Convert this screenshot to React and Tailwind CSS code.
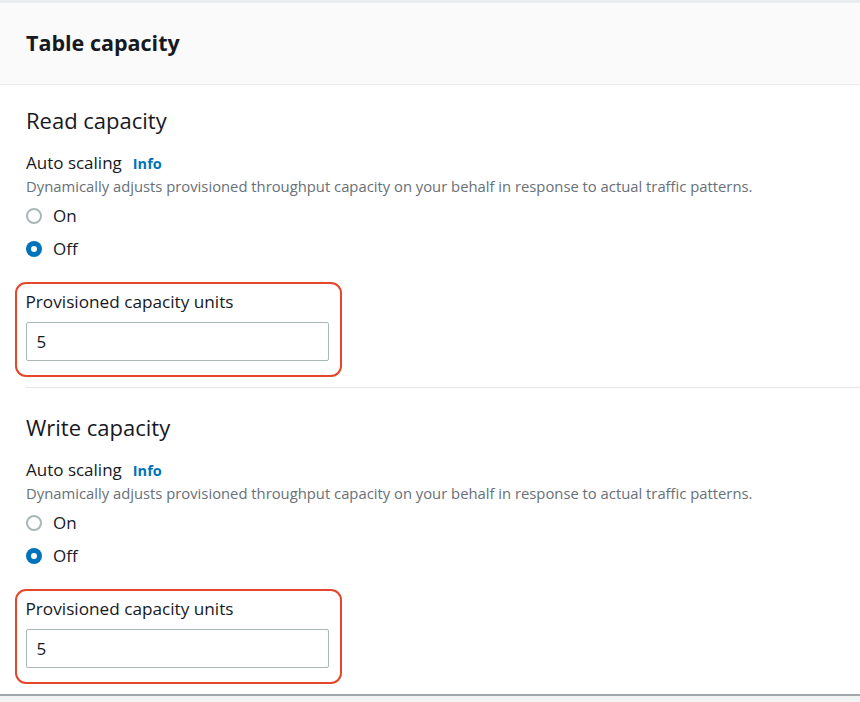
import React from "react";

const Radio = ({ checked, label }) => (
  <div className="flex items-center gap-[11px] h-[24px]">
    {checked ? (
      <span className="w-[16px] h-[16px] rounded-full bg-[#0073bb] flex items-center justify-center">
        <span className="w-[6px] h-[6px] rounded-full bg-white" />
      </span>
    ) : (
      <span className="w-[16px] h-[16px] rounded-full border-2 border-[#aab7b8] bg-white" />
    )}
    <span className="text-[17px] leading-[24px] text-[#16191f]">{label}</span>
  </div>
);

const CapacitySection = ({ title, divider }) => (
  <div className={divider ? "pt-[25px] pb-[10px]" : "pt-[21px]"}>
    <div className="px-[26px]">
      <h2 className="text-[22px] leading-[28px] text-[#16191f]">{title}</h2>
      <div className="mt-[18px] flex items-baseline gap-[11px]">
        <span className="text-[17px] leading-[22px] text-[#16191f]">Auto scaling</span>
        <span className="text-[14.5px] leading-[22px] font-bold text-[#0073bb]">Info</span>
      </div>
      <p className="mt-[1px] text-[14.8px] leading-[20px] text-[#687078] whitespace-nowrap">
        Dynamically adjusts provisioned throughput capacity on your behalf in response to actual traffic patterns.
      </p>
      <div className="mt-[8px] flex flex-col gap-[9px]">
        <Radio label="On" />
        <Radio checked label="Off" />
      </div>
      <div className="mt-[21px] ml-[-11px] w-[327px] border-[2.5px] border-[#e5472b] rounded-[11px] pl-[8.5px] pt-[7px] pb-[14px]">
        <div className="text-[17.2px] leading-[22px] text-[#16191f]">Provisioned capacity units</div>
        <div className="mt-[9px] w-[303px] h-[39px] border border-[#aab7b8] rounded-[2px] flex items-center pl-[10px] text-[17px] text-[#16191f]">
          5
        </div>
      </div>
    </div>
  </div>
);

export default function App() {
  return (
    <div className="w-[860px] h-[702px] bg-white overflow-hidden font-['Open_Sans',sans-serif] flex flex-col">
      <div className="h-[85px] shrink-0 border-t-[3px] border-b border-[#eaeded] bg-[#fafafa] flex items-center px-[26px]">
        <h1 className="text-[21.5px] font-bold text-[#16191f]">Table capacity</h1>
      </div>
      <CapacitySection title="Read capacity" />
      <div className="mt-[10px] ml-[26px] border-t border-[#e5e5e5]" />
      <CapacitySection title="Write capacity" divider />
      <div className="border-t-2 border-[#a0a8ab] bg-[#f2f3f3] flex-1" />
    </div>
  );
}
